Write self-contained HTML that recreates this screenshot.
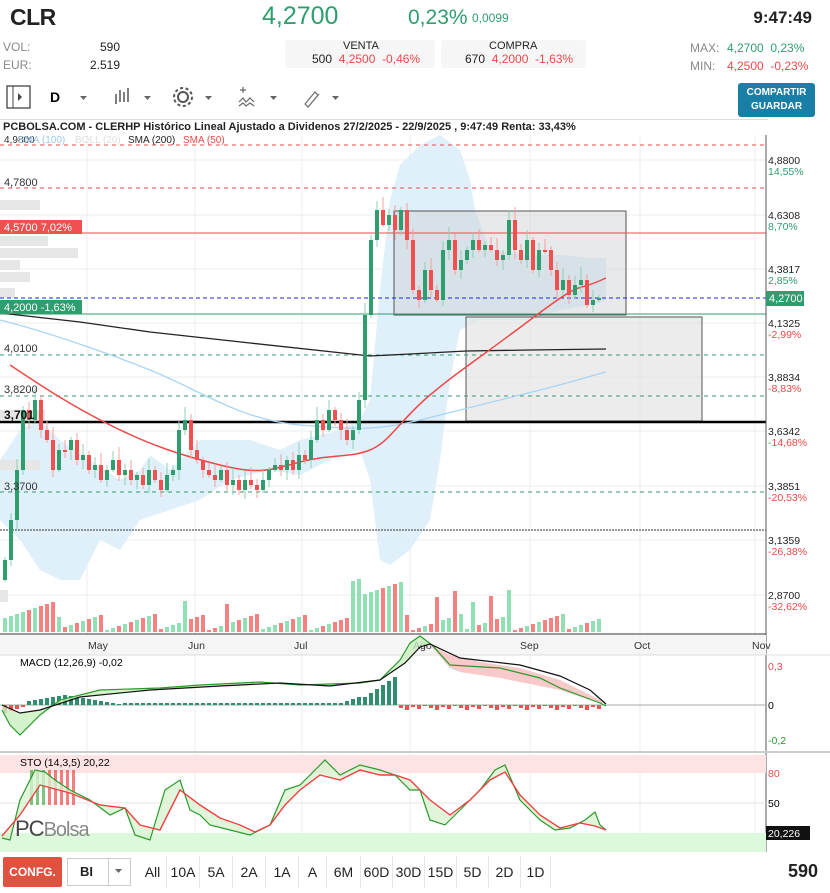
<!DOCTYPE html>
<html><head><meta charset="utf-8">
<style>
*{margin:0;padding:0;box-sizing:border-box}
body{width:830px;height:893px;background:#fff;font-family:"Liberation Sans",sans-serif;position:relative;overflow:hidden;color:#222}
.a{position:absolute;white-space:nowrap}
.g{color:#2e9e6e}.r{color:#f04848}.gr{color:#888}
.box{position:absolute;background:#f6f6f6;border-radius:3px}
.tb{position:absolute;top:856px;height:32px;font-size:14px;line-height:32px;text-align:center;border-right:1px solid #e6e6e6}
</style></head><body>
<div class="a" style="left:10px;top:4px;font-size:23px;font-weight:bold;letter-spacing:-0.5px">CLR</div>
<div class="a g" style="left:262px;top:2px;font-size:25px">4,2700</div>
<div class="a g" style="left:408px;top:6px;font-size:21px">0,23%</div>
<div class="a g" style="left:472px;top:11px;font-size:12px">0,0099</div>
<div class="a" style="right:18px;top:8px;font-size:17px;font-weight:bold">9:47:49</div>

<div class="a gr" style="left:3px;top:40px;font-size:12px">VOL:</div>
<div class="a" style="left:100px;top:40px;font-size:12px">590</div>
<div class="a gr" style="left:3px;top:58px;font-size:12px">EUR:</div>
<div class="a" style="left:90px;top:58px;font-size:12px">2.519</div>
<div class="box" style="left:285px;top:40px;width:150px;height:28px"></div>
<div class="box" style="left:441px;top:40px;width:145px;height:28px"></div>
<div class="a" style="left:343px;top:40px;font-size:11px">VENTA</div>
<div class="a" style="left:489px;top:40px;font-size:11px">COMPRA</div>
<div class="a" style="left:312px;top:52px;font-size:12px">500 <span class="r">&nbsp;4,2500 &nbsp;-0,46%</span></div>
<div class="a" style="left:465px;top:52px;font-size:12px">670 <span class="r">&nbsp;4,2000 &nbsp;-1,63%</span></div>
<div class="a gr" style="left:690px;top:41px;font-size:12px">MAX:</div>
<div class="a g" style="left:727px;top:41px;font-size:12px">4,2700 &nbsp;0,23%</div>
<div class="a gr" style="left:690px;top:59px;font-size:12px">MIN:</div>
<div class="a r" style="left:727px;top:59px;font-size:12px">4,2500 &nbsp;-0,23%</div>

<svg class="a" style="left:0;top:82px" width="360" height="30">
<rect x="7" y="4" width="23" height="22" fill="none" stroke="#444" stroke-width="1.3"/><line x1="13" y1="4" x2="13" y2="26" stroke="#444"/><path d="M18 11l4 4-4 4z" fill="#444"/>
<text x="50" y="20" font-size="14" font-weight="bold" font-family="Liberation Sans">D</text>
<path d="M80 14h7l-3.5 4z" fill="#666"/>
<path d="M116 12v10M120 8v12M124 10v10M128 6v14" stroke="#555" stroke-width="1.5"/>
<path d="M144 14h7l-3.5 4z" fill="#666"/>
<circle cx="183" cy="15" r="5" fill="none" stroke="#555" stroke-width="2"/><circle cx="183" cy="15" r="9" fill="none" stroke="#555" stroke-width="2" stroke-dasharray="3 2.6"/>
<path d="M205 14h7l-3.5 4z" fill="#666"/>
<path d="M240 8h6M243 5v6M239 20l4-4 3 4 4-4 4 4M239 24l4-3 3 3 4-3 4 3" stroke="#666" fill="none" stroke-width="1.2"/>
<path d="M270 14h7l-3.5 4z" fill="#666"/>
<path d="M305 22l10-12 3 3-10 12zM309 24l10-12" stroke="#777" fill="none" stroke-width="1.3"/>
<path d="M332 14h7l-3.5 4z" fill="#666"/>
</svg>
<div class="a" style="left:738px;top:83px;width:77px;height:34px;background:#1a7fa6;border-radius:3px;color:#fff;font-size:10px;font-weight:bold;text-align:center;line-height:14px;padding-top:3px">COMPARTIR<br>GUARDAR</div>

<div class="a" style="left:0;top:119px;width:768px;height:1px;background:#ddd"></div>
<div class="a" style="left:3px;top:121px;font-size:11px;font-weight:bold">PCBOLSA.COM - CLERHP Histórico Lineal Ajustado a Dividenos 27/2/2025 - 22/9/2025 , 9:47:49 Renta: 33,43%</div>

<svg id="ch" class="a" style="left:0;top:135px" width="830" height="720" viewBox="0 135 830 720" font-family="Liberation Sans" font-size="11">
<g stroke="#ececec">
<path d="M0 160H766M0 215H766M0 269H766M0 323H766M0 377H766M0 431H766M0 486H766M0 540H766M0 595H766"/>
<path d="M87 135V852M195 135V852M302 135V852M410 135V852M530 135V852M640 135V852M755 135V852"/>
</g>
<path d="M0 460L20 430 40 420 60 440 90 460 120 480 140 470 150 455 170 470 200 440 250 440 280 450 300 440 340 430 360 420 370 400 380 290 390 200 400 165 420 145 440 135 460 150 470 180 475 210 490 250 530 255 560 255 590 258 606 258L606 300 590 305 560 310 530 320 500 320 480 320 460 330 450 380 440 460 430 520 410 550 390 565 380 560 370 480 360 450 330 460 300 475 270 470 230 480 200 500 170 510 140 520 120 550 100 540 80 580 60 580 40 570 20 540 0 520Z" fill="#dff0fb"/>
<rect x="394" y="211" width="232" height="104" fill="#cfd3d6" fill-opacity="0.5" stroke="#555" stroke-width="1"/>
<rect x="466" y="317" width="236" height="104" fill="#e4e4e4" fill-opacity="0.7" stroke="#555" stroke-width="1"/>
<g fill="#e6e6e6"><rect x="0" y="200" width="40" height="10"/><rect x="0" y="236" width="48" height="10"/><rect x="0" y="248" width="78" height="10"/><rect x="0" y="260" width="20" height="10"/><rect x="0" y="272" width="30" height="10"/><rect x="0" y="288" width="15" height="10"/><rect x="0" y="410" width="45" height="10"/><rect x="0" y="460" width="40" height="10"/><rect x="0" y="590" width="8" height="12"/></g>
<g stroke-width="1" fill="none">
<path d="M0 145H766M0 188H766" stroke="#f04848" stroke-dasharray="4 4"/>
<path d="M0 233H766" stroke="#f04848"/>
<path d="M0 298H766" stroke="#2020e0" stroke-dasharray="4 3"/>
<path d="M0 314H766" stroke="#2e9e6e"/>
<path d="M0 355H766M0 396H766M0 492H766" stroke="#2e9e6e" stroke-dasharray="4 4"/>
<path d="M0 530H766" stroke="#333" stroke-dasharray="2 1"/>
<path d="M0 422H766" stroke="#000" stroke-width="2.5"/>
</g>
<path d="M0 320C40 330 100 350 150 370S240 420 300 425 380 430 420 420 500 400 540 390 590 376 606 372" stroke="#a8d4f5" stroke-width="1.3" fill="none"/>
<path d="M0 313L80 322 150 332 250 343 370 356 410 354 466 351 530 350 606 349" stroke="#222" stroke-width="1.3" fill="none"/>
<path d="M10 365C40 385 70 405 110 425S180 455 220 465 270 470 300 462 350 458 370 450 400 420 430 395 470 365 530 320 570 295 606 278" stroke="#f04848" stroke-width="1.5" fill="none"/>
<g id="cand"></g>
<g id="vol"></g>
<text x="4" y="143" font-size="10" fill="#333">4,9800</text>
<text x="18" y="143" font-size="10" fill="#9cc8ec">SMA (100)</text><text x="75" y="143" font-size="10" fill="#ddd">BOLL (20)</text><text x="128" y="143" font-size="10" fill="#222">SMA (200)</text><text x="183" y="143" font-size="10" fill="#f04848">SMA (50)</text>
<text x="4" y="186" fill="#333">4,7800</text>
<rect x="0" y="220" width="82" height="14" fill="#f05050"/><text x="4" y="231" fill="#fff">4,5700  7,02%</text>
<rect x="0" y="300" width="82" height="14" fill="#2e9e6e"/><text x="4" y="311" fill="#fff">4,2000  -1,63%</text>
<text x="4" y="352" fill="#333">4,0100</text>
<text x="4" y="393" fill="#333">3,8200</text>
<text x="4" y="419" font-weight="bold" font-size="12" fill="#111">3,701</text>
<text x="4" y="490" fill="#333">3,3700</text>
<line x1="766" y1="135" x2="766" y2="852" stroke="#555"/>
<g fill="#222" font-size="10.5">
<text x="768" y="164">4,8800</text><text x="768" y="175" fill="#2e9e6e">14,55%</text>
<text x="768" y="219">4,6308</text><text x="768" y="230" fill="#2e9e6e">8,70%</text>
<text x="768" y="273">4,3817</text><text x="768" y="284" fill="#2e9e6e">2,85%</text>
<text x="768" y="327">4,1325</text><text x="768" y="338" fill="#f04848">-2,99%</text>
<text x="768" y="381">3,8834</text><text x="768" y="392" fill="#f04848">-8,83%</text>
<text x="768" y="435">3,6342</text><text x="768" y="446" fill="#f04848">-14,68%</text>
<text x="768" y="490">3,3851</text><text x="768" y="501" fill="#f04848">-20,53%</text>
<text x="768" y="544">3,1359</text><text x="768" y="555" fill="#f04848">-26,38%</text>
<text x="768" y="599">2,8700</text><text x="768" y="610" fill="#f04848">-32,62%</text>
</g>
<rect x="766" y="291" width="38" height="15" fill="#2e9e6e"/><text x="769" y="302" fill="#fff">4,2700</text>
<rect x="0" y="635" width="766" height="20" fill="#f5f5f5"/>
<line x1="0" y1="634" x2="766" y2="634" stroke="#333"/>
<g font-size="10.5" fill="#333"><text x="88" y="649">May</text><text x="188" y="649">Jun</text><text x="294" y="649">Jul</text><text x="413" y="649">Ago</text><text x="520" y="649">Sep</text><text x="634" y="649">Oct</text><text x="752" y="649">Nov</text></g>
<line x1="0" y1="655" x2="830" y2="655" stroke="#ddd"/>
<line x1="0" y1="705" x2="766" y2="705" stroke="#aaa"/>
<g id="macd"></g>
<path d="M2 710L10 725 20 735 40 715 60 700 100 690 160 688 200 685 260 682 300 685 360 683 380 680 400 660 410 643 420 636 432 645 450 660 500 665 540 675 560 683 600 700 606 705 L606 704 590 698 560 686 520 675 470 668 430 645 420 645 405 663 380 680 330 686 280 683 220 686 150 690 80 697 40 710 20 713 2 705Z" fill="#c9f0c0" opacity="0.8"/>
<path d="M430 645L450 655 480 662 520 668 560 680 600 700 606 704 590 700 560 690 500 678 460 672 450 668Z" fill="#f7c9c9"/>
<path d="M2 710L10 725 20 735 40 715 60 700 100 690 160 688 200 685 260 682 300 685 360 683 380 680 400 660 410 643 420 636 432 645 450 665 500 668 540 678 560 688 600 703 606 706" stroke="#2a9a2a" fill="none" stroke-width="1.2"/>
<path d="M2 705L20 713 40 710 80 697 150 690 220 686 280 683 330 686 380 680 405 663 420 647 430 644 460 658 520 665 560 676 590 690 606 704" stroke="#111" fill="none" stroke-width="1.2"/>
<text x="20" y="666" font-size="10.5">MACD (12,26,9)  -0,02</text>
<text x="768" y="670" fill="#f04848" font-size="10.5">0,3</text><text x="768" y="709" font-size="10.5">0</text><text x="768" y="744" fill="#2a9a2a" font-size="10.5">-0,2</text>
<line x1="0" y1="752" x2="830" y2="752" stroke="#ccc" stroke-width="2"/>
<rect x="0" y="755" width="766" height="18" fill="#fde3e3"/>
<rect x="0" y="833" width="766" height="19" fill="#dcf9dc"/>
<line x1="0" y1="803" x2="766" y2="803" stroke="#e5e5e5"/>
<g fill="#f04848" opacity="0.7"><rect x="48" y="770" width="3" height="35"/><rect x="54" y="770" width="3" height="35"/><rect x="60" y="770" width="3" height="35"/><rect x="66" y="770" width="3" height="35"/><rect x="72" y="770" width="3" height="35"/></g>
<g fill="#2e9e2e" opacity="0.6"><rect x="30" y="770" width="3" height="35"/><rect x="36" y="770" width="3" height="35"/><rect x="42" y="770" width="3" height="35"/></g>
<path d="M2 838L10 840 20 800 35 770 45 772 55 780 70 790 90 800 110 815 125 808 135 835 150 840 165 790 180 780 190 810 200 815 210 825 230 830 250 835 270 825 285 790 300 785 315 770 325 760 340 775 360 765 380 770 395 775 410 790 420 790 430 820 445 825 460 810 480 790 495 770 505 765 520 800 540 820 555 830 570 828 585 820 595 812 600 825 606 830 595 826 580 823 560 828 540 815 520 795 505 772 490 780 470 800 450 815 430 800 410 780 395 775 380 775 360 770 340 780 320 775 300 790 285 805 270 825 255 832 240 825 220 818 200 805 180 790 160 830 140 825 125 808 100 805 70 793 40 785 20 815 2 836Z" fill="#d8f2d0" opacity="0.8"/>
<path d="M2 838L10 840 20 800 35 770 45 772 55 780 70 790 90 800 110 815 125 808 135 835 150 840 165 790 180 780 190 810 200 815 210 825 230 830 250 835 270 825 285 790 300 785 315 770 325 760 340 775 360 765 380 770 395 775 410 790 420 790 430 820 445 825 460 810 480 790 495 770 505 765 520 800 540 820 555 830 570 828 585 820 595 812 600 825 606 830" stroke="#2a9a2a" fill="none" stroke-width="1.2"/>
<path d="M2 836L20 815 40 785 70 793 100 805 125 808 140 825 160 830 180 790 200 805 220 818 240 825 255 832 270 825 285 805 300 790 320 775 340 780 360 770 380 775 395 775 410 780 430 800 450 815 470 800 490 780 505 772 520 795 540 815 560 828 580 823 595 826 606 830" stroke="#f04040" fill="none" stroke-width="1.4"/>
<text x="20" y="766" font-size="10.5">STO (14,3,5)   20,22</text>
<text x="768" y="777" fill="#f04848" font-size="10.5">80</text><text x="768" y="807" font-size="10.5">50</text>
<rect x="766" y="826" width="44" height="14" fill="#111"/><text x="768" y="837" fill="#fff" font-size="10.5">20,226</text>
<text x="15" y="836" font-size="22" fill="#444" letter-spacing="-1">PC<tspan fill="#888" font-size="20">Bolsa</tspan></text>
</svg>

<div class="a" style="left:3px;top:857px;width:59px;height:30px;background:#e05240;color:#fff;font-size:12px;font-weight:bold;line-height:30px;text-align:center;border-radius:2px">CONFG.</div>
<div class="a" style="left:67px;top:858px;width:64px;height:28px;border:1px solid #ccc;font-size:13px;font-weight:bold;line-height:26px;padding-left:12px">BI</div>
<div class="a" style="left:108px;top:858px;width:1px;height:28px;background:#ccc"></div>
<svg class="a" style="left:115px;top:868px" width="8" height="6"><path d="M0 1h7l-3.5 4z" fill="#666"/></svg>
<div class="tb" style="left:139px;width:28px">All</div>
<div class="tb" style="left:167px;width:33px">10A</div>
<div class="tb" style="left:200px;width:33px">5A</div>
<div class="tb" style="left:233px;width:33px">2A</div>
<div class="tb" style="left:266px;width:33px">1A</div>
<div class="tb" style="left:299px;width:28px">A</div>
<div class="tb" style="left:327px;width:34px">6M</div>
<div class="tb" style="left:361px;width:32px">60D</div>
<div class="tb" style="left:393px;width:32px">30D</div>
<div class="tb" style="left:425px;width:32px">15D</div>
<div class="tb" style="left:457px;width:32px">5D</div>
<div class="tb" style="left:489px;width:32px">2D</div>
<div class="tb" style="left:521px;width:30px">1D</div>
<div class="a" style="right:12px;top:861px;font-size:18px;font-weight:bold">590</div>

<script>
var ys=[560,520,470,410,420,400,430,440,470,450,450,440,460,455,470,465,480,470,460,475,470,480,475,485,470,480,490,475,470,430,420,450,460,470,475,480,470,485,480,490,480,485,490,480,470,465,470,460,470,455,460,440,420,430,410,420,430,440,430,400,315,240,210,225,215,230,210,240,290,300,270,290,300,250,240,270,260,250,240,250,245,250,260,255,220,250,260,240,270,250,250,270,290,280,295,285,280,305,300,298];
var ns="http://www.w3.org/2000/svg",c=document.getElementById('cand'),v=document.getElementById('vol'),m=document.getElementById('macd');
function el(p,t,a){var e=document.createElementNS(ns,t);for(var k in a)e.setAttribute(k,a[k]);p.appendChild(e);}
for(var i=0;i<ys.length;i++){
 var x=5+6*i,p=i?ys[i-1]:580,y=ys[i],up=y<p,col=up?'#2e9e6e':'#f05050';
 var t=Math.min(p,y),b=Math.max(p,y);if(b-t<2)b=t+2;
 var w=((i*37)%11)+3;
 el(c,'line',{x1:x,x2:x,y1:t-w,y2:b+((i*13)%9)+2,stroke:up?'#8fd0b3':'#f5a0a0','stroke-width':1});
 el(c,'rect',{x:x-2,y:t,width:4,height:b-t,fill:col});
 var h=((i*53)%17)+2;if(i>=58&&i<=66)h+=35;if(i>=70&&i<85&&i%3==0)h+=25;if(i<10)h+=12;if(i==30||i==37)h+=20;
 el(v,'rect',{x:x-2,y:632-h,width:4,height:h,fill:up?'#8fe0b3':'#f78080'});
}
for(var i=0;i<100;i++){var x=5+6*i,hh;
 if(i<4)hh=-(8-i*2);else if(i<20)hh=Math.max(1,10-Math.abs(i-10));else if(i<66)hh=(i>55?(i-55)*2:2);else hh=-(((i*7)%5)+1);
 if(i>=60&&i<66)hh=(i-58)*4;
 el(m,'rect',{x:x-2,y:hh>0?705-hh:705,width:4,height:Math.abs(hh),fill:hh>0?'#2e8e6e':'#f05050'});}
</script>
</body></html>
